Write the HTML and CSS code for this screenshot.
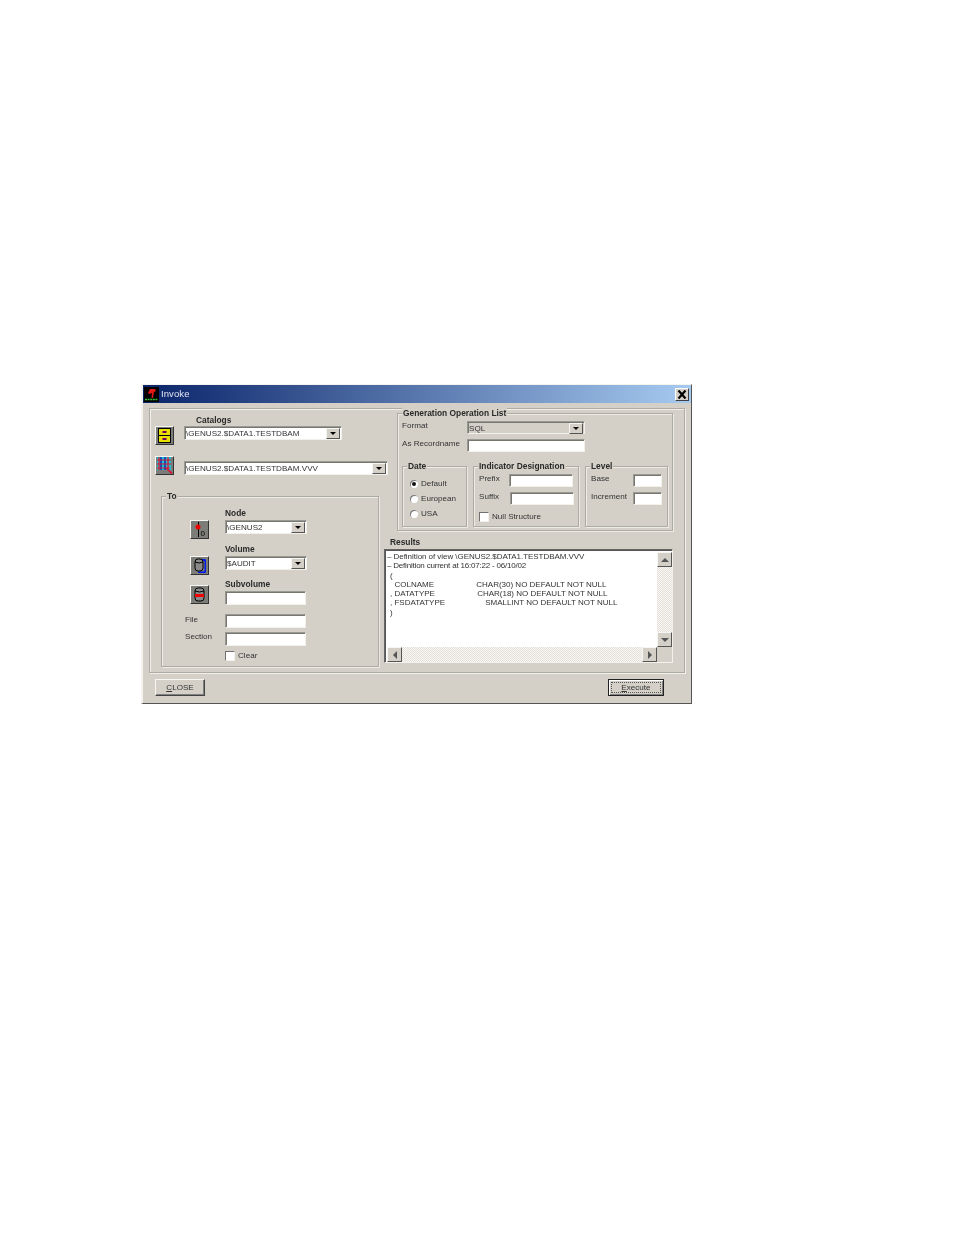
FILE: index.html
```html
<!DOCTYPE html>
<html lang="en">
<head>
<meta charset="utf-8">
<title>Invoke</title>
<link rel="stylesheet" href="styles.css">
</head>
<body>
<div class="window">
  <div class="titlebar">
    <svg class="appicon" width="15" height="15" viewBox="0 0 15 15"><rect width="15" height="15" fill="#000"/><path d="M6 2h5l1 2-2 1-1 6H7.500l.5-5-3 1-1-1z" fill="#e01818"/><path d="M1 12.500h13" stroke="#30c030" stroke-width="1.600" stroke-dasharray="2 .6"/></svg>
    <span class="title">Invoke</span>
    <span class="closebtn"><svg width="10" height="9" viewBox="0 0 10 9"><path d="M1.500 .5l7 8M8.500 .5l-7 8" stroke="#000" stroke-width="2.200"/></svg></span>
  </div>
  <div class="panel">
    <div class="leftcol">
      <div class="lbl b catalogs">Catalogs</div>
      <div class="catrow">
        <span class="iconbtn cat"><svg width="15" height="15" viewBox="0 0 15 15"><rect x="1.500" y=".5" width="12" height="14" fill="#e8e000" stroke="#000"/><path d="M2 7.500h11" stroke="#000"/><rect x="5.500" y="3" width="4" height="2" fill="#700060"/><rect x="5.500" y="10" width="4" height="2" fill="#700060"/></svg></span>
        <div class="combo c1"><span class="val">\GENUS2.$DATA1.TESTDBAM</span><span class="arrow"></span></div>
      </div>
      <div class="catrow second">
        <span class="iconbtn cat"><svg width="17" height="17" viewBox="0 0 17 17"><rect x="1" y="0" width="14" height="13" fill="#20c0d0"/><path d="M5 0v13M9 0v13" stroke="#1020b0" stroke-width="1.400"/><path d="M1 3h14M1 7h14M1 11h13M3 0v13M12 0v12" stroke="#e01030" stroke-width="1.200"/><path d="M10 11l6 5.500" stroke="#e01030" stroke-width="1.600"/></svg></span>
        <div class="combo c2 low"><span class="val">\GENUS2.$DATA1.TESTDBAM.VVV</span><span class="arrow"></span></div>
      </div>
      <div class="group togroup">
        <span class="legend b">To</span>
        <div class="toside">
          <span class="iconbtn t1"><svg width="15" height="15" viewBox="0 0 15 15"><path d="M6.500 0v15" stroke="#000"/><circle cx="6" cy="5" r="2.500" fill="#f00000"/><text x="8.500" y="14" class="icontext">0</text></svg></span>
          <span class="iconbtn t2"><svg width="13" height="15" viewBox="0 0 13 15"><path d="M9 2h2.500q1 0 1 1.500v9q0 2-2.500 2H5" fill="none" stroke="#0018f0" stroke-width="2"/><rect x="2" y="1" width="8" height="12" rx="3" fill="#8a8a8a" stroke="#000"/><path d="M2 4q4 2 8 0" fill="none" stroke="#000"/></svg></span>
          <span class="iconbtn t3"><svg width="11" height="15" viewBox="0 0 11 15"><rect x="1" y="1" width="9" height="13" rx="3" fill="#8a8a8a" stroke="#000"/><path d="M1 4q4.500 2 9 0" fill="none" stroke="#000"/><rect x="1" y="7" width="9" height="3" fill="#f00000"/></svg></span>
          <div class="lbl file">File</div>
          <div class="lbl section">Section</div>
        </div>
        <div class="tomain">
          <div class="lbl b m-node">Node</div>
          <div class="combo c3 m-nodec"><span class="val">\GENUS2</span><span class="arrow"></span></div>
          <div class="lbl b m-vol">Volume</div>
          <div class="combo c3 m-volc"><span class="val">$AUDIT</span><span class="arrow"></span></div>
          <div class="lbl b m-sub">Subvolume</div>
          <div class="input i-wide m-subi"></div>
          <div class="input i-wide m-file"></div>
          <div class="input i-wide m-sect"></div>
          <label class="check m-clear"><span class="box"></span><span class="lbl">Clear</span></label>
        </div>
      </div>
    </div>
    <div class="rightcol">
      <div class="group gen">
        <span class="legend b">Generation Operation List</span>
        <div class="genrow first">
          <span class="lbl genlbl">Format</span>
          <div class="combo c4 disabled"><span class="val">SQL</span><span class="arrow"></span></div>
        </div>
        <div class="genrow second">
          <span class="lbl genlbl">As Recordname</span>
          <div class="input i-rec"></div>
        </div>
        <div class="subgroups">
          <div class="group date">
            <span class="legend b">Date</span>
            <div class="radio"><span class="dot on"></span><span class="lbl">Default</span></div>
            <div class="radio"><span class="dot"></span><span class="lbl">European</span></div>
            <div class="radio"><span class="dot"></span><span class="lbl">USA</span></div>
          </div>
          <div class="group indicator">
            <span class="legend b">Indicator Designation</span>
            <div class="pair p1"><span class="lbl w30">Prefix</span><div class="input i-pre"></div></div>
            <div class="pair p2"><span class="lbl w31">Suffix</span><div class="input i-pre"></div></div>
            <label class="check p3"><span class="box"></span><span class="lbl">Null Structure</span></label>
          </div>
          <div class="group level">
            <span class="legend b">Level</span>
            <div class="pair p1"><span class="lbl w42">Base</span><div class="input i-lvl"></div></div>
            <div class="pair p2"><span class="lbl w42">Increment</span><div class="input i-lvl"></div></div>
          </div>
        </div>
      </div>
      <div class="results">
        <div class="lbl b resl">Results</div>
        <div class="resbox">
          <div class="restext">
<div class="line dash d1">– Definition of view \GENUS2.$DATA1.TESTDBAM.VVV</div>
<div class="line dash d2">– Definition current at 16:07:22 - 06/10/02</div>
<div class="line">(</div>
<div class="line">  COLNAME                   CHAR(30) NO DEFAULT NOT NULL</div>
<div class="line">, DATATYPE                   CHAR(18) NO DEFAULT NOT NULL</div>
<div class="line">, FSDATATYPE                  SMALLINT NO DEFAULT NOT NULL</div>
<div class="line">)</div>
          </div>
          <div class="vscroll">
            <span class="sbtn"><i class="tri up"></i></span>
            <span class="track"></span>
            <span class="sbtn"><i class="tri down"></i></span>
          </div>
          <div class="hscroll">
            <span class="sbtn"><i class="tri left"></i></span>
            <span class="track"></span>
            <span class="sbtn"><i class="tri right"></i></span>
          </div>
          <span class="corner"></span>
        </div>
      </div>
    </div>
  </div>
  <div class="buttons">
    <span class="btn close"><u>C</u>LOSE</span>
    <span class="btn exec"><span class="focus"><u>E</u>xecute</span></span>
  </div>
</div>
</body>
</html>
```
FILE: styles.css
```css
* { box-sizing: border-box; }
html, body { margin: 0; padding: 0; background: #fff; }
body { font-family: "Liberation Sans", Arial, sans-serif; font-size: 8.1px; color: #333; }

.window {
  margin: 384px 0 0 141px;
  width: 551px;
  height: 320px;
  background: #d4d0c8;
  border-left: 2px solid #f4f3ef;
  border-top: 1px solid #f4f3ef;
  border-right: 1px solid #555;
  border-bottom: 1px solid #555;
  filter: blur(0.35px);
}
.titlebar {
  height: 18px;
  display: flex;
  align-items: center;
  padding-left: 1px;
  background: linear-gradient(90deg, #0a246a, #a6caf0);
}
.appicon { flex: none; }
.title { margin: -1px 0 0 2px; color: #e4e6f2; font-size: 9.5px; letter-spacing: .1px; }
.closebtn {
  margin-left: auto;
  margin-right: 2px;
  width: 14px;
  height: 13px;
  display: flex;
  align-items: center;
  justify-content: center;
  background: #d4d0c8;
  border: 1px solid;
  border-color: #fff #404040 #404040 #fff;
}

.lbl { line-height: 10px; height: 10px; white-space: nowrap; }
.b { font-weight: bold; font-size: 8.4px; color: #2a2a2a; }

.panel {
  margin: 5px 0 0 6px;
  width: 536px;
  height: 265px;
  display: flex;
  border: 1px solid #aeaba3;
  box-shadow: inset 1px 1px 0 #f0efea, 1px 1px 0 #f0efea;
}
.leftcol { width: 247px; flex: none; }
.rightcol { flex: 1; padding-top: 4px; }

.catalogs { margin: 6px 0 1px 46px; }
.catrow { display: flex; padding-left: 5px; align-items: flex-start; }
.catrow.second { margin-top: 11px; }
.cat { margin-right: 10px; background: #73736c; }

.iconbtn {
  display: flex;
  flex: none;
  align-items: center;
  justify-content: center;
  width: 19px;
  height: 19px;
  background: #7c7c78;
  border: 1px solid;
  border-color: #f6f6f2 #333 #333 #f6f6f2;
}
.icontext { font: 8px "Liberation Sans", Arial, sans-serif; fill: #000; }

.combo {
  display: flex;
  align-items: center;
  height: 14px;
  background: #fff;
  border: 1px solid;
  border-color: #9a9a94 #f2f1ec #f2f1ec #9a9a94;
  box-shadow: inset 1px 1px 0 #77776f;
  padding: 1px 1px 0 1px;
}
.combo.low { margin-top: 5px; }
.combo .val { flex: 1; line-height: 11px; }
.arrow {
  flex: none;
  position: relative;
  width: 14px;
  height: 11px;
  background: #d4d0c8;
  border: 1px solid;
  border-color: #f6f6f2 #555 #555 #f6f6f2;
}
.arrow::after {
  content: "";
  position: absolute;
  left: 3px;
  top: 3px;
  border: 3px solid transparent;
  border-top: 3px solid #000;
  border-bottom: 0;
}
.c1 { width: 158px; }
.c2 { width: 204px; }
.c3 { width: 82px; }
.c4 { width: 118px; height: 13px; }
.disabled { background: #d4d0c8; }

.input {
  height: 14px;
  background: #fff;
  border: 1px solid;
  border-color: #9a9a94 #f2f1ec #f2f1ec #9a9a94;
  box-shadow: inset 1px 1px 0 #77776f;
}
.i-wide { width: 81px; }
.i-rec { width: 118px; height: 13px; }
.i-pre { width: 64px; height: 13px; }
.i-lvl { width: 29px; height: 13px; }

.group {
  position: relative;
  border: 1px solid #aeaba3;
  box-shadow: inset 1px 1px 0 #ecebe6, 1px 1px 0 #ecebe6;
}
.legend {
  position: absolute;
  top: -6px;
  left: 4px;
  padding: 0 1px;
  line-height: 10px;
  background: #d4d0c8;
  white-space: nowrap;
}

.togroup {
  display: flex;
  margin: 21px 0 0 11px;
  width: 218px;
  height: 171px;
}
.toside { width: 63px; flex: none; padding-left: 23px; }
.toside .iconbtn { margin-left: 5px; }
.t1 { margin-top: 23px; }
.t2 { margin-top: 17px; }
.t3 { margin-top: 10px; }
.file { margin-top: 11px; }
.section { margin-top: 7px; }
.m-node { margin-top: 11px; }
.m-nodec { margin-top: 2px; }
.m-vol { margin-top: 10px; }
.m-volc { margin-top: 2px; }
.m-sub { margin-top: 9px; }
.m-subi { margin-top: 2px; }
.m-file { margin-top: 9px; }
.m-sect { margin-top: 4px; }
.m-clear { margin-top: 5px; }

.check { display: flex; align-items: center; gap: 3px; }
.box {
  width: 10px;
  height: 10px;
  flex: none;
  background: #fff;
  border: 1px solid;
  border-color: #707070 #f2f1ec #f2f1ec #707070;
}

.gen { width: 276px; height: 118px; padding-left: 4px; }
.genrow { display: flex; }
.genrow.first { margin-top: 7px; }
.genrow.second { margin-top: 5px; }
.genlbl { width: 65px; flex: none; }
.subgroups { display: flex; gap: 6px; margin-top: 14px; }
.date { width: 65px; height: 61px; padding: 12px 0 0 7px; }
.indicator { width: 106px; height: 61px; padding: 7px 0 0 5px; }
.level { width: 83px; height: 61px; padding: 7px 0 0 5px; }
.radio { display: flex; align-items: center; gap: 3px; height: 9px; margin-bottom: 6px; }
.dot {
  width: 8px;
  height: 8px;
  flex: none;
  border-radius: 50%;
  background: #fff;
  box-shadow: inset 1px 1px 0 #777;
  position: relative;
}
.dot.on::after {
  content: "";
  position: absolute;
  left: 2px;
  top: 2px;
  width: 4px;
  height: 4px;
  border-radius: 50%;
  background: #111;
}
.pair { display: flex; }
.pair .lbl { margin-top: -1px; line-height: 11px; height: 11px; }
.pair.p2 { margin-top: 5px; }
.check.p3 { margin-top: 7px; }
.check.p3 .lbl { margin-top: -1px; }
.w30 { width: 30px; flex: none; }
.w31 { width: 31px; flex: none; }
.w42 { width: 42px; flex: none; }

.results { margin-left: -13px; }
.resl { margin: 6px 0 2px 6px; }
.resbox {
  position: relative;
  width: 289px;
  height: 114px;
  background: #fff;
  border: 1px solid;
  border-color: #666 #f2f1ec #f2f1ec #666;
  box-shadow: inset 1px 1px 0 #555;
  overflow: hidden;
}
.restext { padding: 2px 0 0 5px; font-size: 8px; line-height: 9.3px; color: #333; }
.line { white-space: pre; height: 9.3px; }
.line.dash { margin-left: -3px; }
.line.d1 { letter-spacing: -.05px; }
.line.d2 { letter-spacing: -.2px; }
.vscroll {
  position: absolute;
  top: 2px;
  right: 0;
  bottom: 15px;
  width: 15px;
  display: flex;
  flex-direction: column;
}
.hscroll {
  position: absolute;
  left: 2px;
  right: 15px;
  bottom: 0;
  height: 15px;
  display: flex;
}
.track {
  flex: 1;
  background: repeating-conic-gradient(#e2e0d9 0 25%, #f8f7f4 0 50%) 0 0 / 2px 2px;
}
.sbtn {
  flex: none;
  width: 15px;
  height: 15px;
  display: flex;
  align-items: center;
  justify-content: center;
  background: #d4d0c8;
  border: 1px solid;
  border-color: #f6f6f2 #555 #555 #f6f6f2;
}
.tri { width: 0; height: 0; border: 4px solid transparent; }
.tri.up { border-top: 0; border-bottom-color: #555; }
.tri.down { border-bottom: 0; border-top-color: #555; }
.tri.left { border-left: 0; border-right-color: #555; }
.tri.right { border-right: 0; border-left-color: #555; }
.corner {
  position: absolute;
  right: 0;
  bottom: 0;
  width: 15px;
  height: 15px;
  background: #d4d0c8;
}

.buttons {
  display: flex;
  justify-content: space-between;
  margin-top: 6px;
  padding: 0 27px 0 12px;
}
.btn {
  display: flex;
  align-items: center;
  justify-content: center;
  height: 17px;
  color: #333;
  border: 1px solid;
  border-color: #f6f6f2 #444 #444 #f6f6f2;
  box-shadow: inset -1px -1px 0 #808080;
}
.close { width: 50px; }
.exec { width: 56px; border-color: #222; box-shadow: inset 1px 1px 0 #fff, inset -1px -1px 0 #808080; padding: 2px; }
.focus { display: flex; align-items: center; justify-content: center; width: 100%; height: 100%; outline: 1px dotted #555; outline-offset: -1px; }
```
